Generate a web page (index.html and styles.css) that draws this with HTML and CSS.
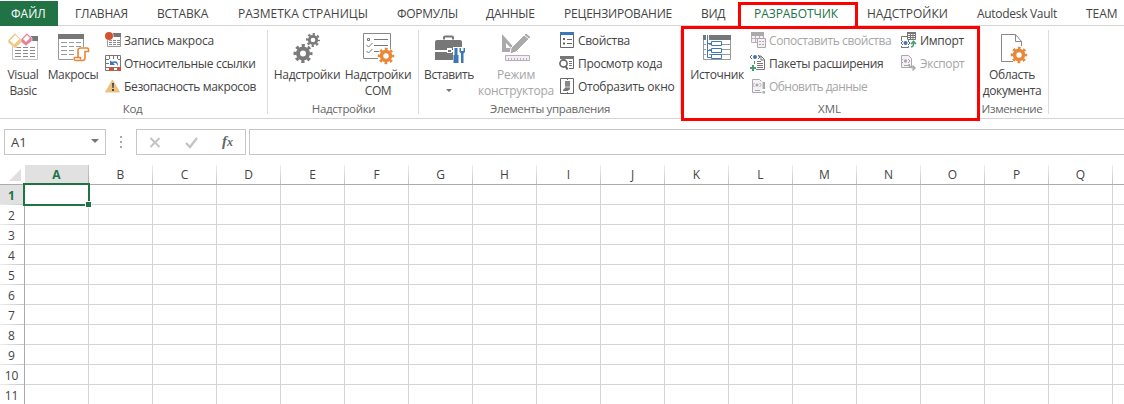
FILE: index.html
```
<!DOCTYPE html>
<html lang="ru">
<head>
<meta charset="utf-8">
<title>Excel</title>
<link rel="stylesheet" href="styles.css">
</head>
<body>
<div class="app">
<nav class="tabs">
<span class="file">ФАЙЛ</span>
<span class="tab t-home">ГЛАВНАЯ</span><span class="tab t-insert">ВСТАВКА</span><span class="tab t-layout">РАЗМЕТКА СТРАНИЦЫ</span><span class="tab t-formulas">ФОРМУЛЫ</span><span class="tab t-data">ДАННЫЕ</span><span class="tab t-review">РЕЦЕНЗИРОВАНИЕ</span><span class="tab t-view">ВИД</span><span class="tab t-dev">РАЗРАБОТЧИК</span><span class="tab t-addins">НАДСТРОЙКИ</span><span class="tab t-vault">Autodesk Vault</span><span class="tab t-team">TEAM</span>
<i class="mark mark-tab"></i>
</nav>

<div class="ribbon">
<section class="group g-code">
<div class="tools">
<div class="big b-vb">
<svg width="32" height="32" viewBox="-1 0 32 32"><path d="M4.500 13V27.500H29.500V6.500" fill="#fff" stroke="#c4c4c4"/><path d="M22 4h8v5h-8z" fill="#777"/><path d="M7 15.500h6m2 0h5m2 0h5M7 18.500h6m2 0h5m2 0h5M7 21.500h6m2 0h5m2 0h5M7 24.500h6m2 0h5m2 0h5" stroke="#8a8a8a"/><path d="M0 8l7-7 6.500 6.500v3L7 16.500l-7-6z" fill="#efc983" stroke="#fff" stroke-width=".6"/><path d="M7.500 3l4 4-5.500 5.500-4-4z" fill="#fff"/><path d="M13 7l6-6 5 5v3l-6 5-5-4z" fill="#e38198" stroke="#fff" stroke-width=".6"/><path d="M19 3l3 3-4 4-3-3z" fill="#fff"/></svg>
<span>Visual<br>Basic</span></div>
<div class="big b-macro">
<svg width="32" height="32" viewBox="0 0 32 32"><path d="M1.500 2.500h25v25h-25z" fill="#fff" stroke="#999"/><path d="M1 2h26v5H1z" fill="#777"/><path d="M4 10.500h6m2 0h5m2 0h5M4 14.500h6m2 0h5m2 0h5M4 18.500h6m2 0h5M4 22.500h6m2 0h5" stroke="#999"/><path d="M18 15h14v14H16z" fill="#fff"/><path d="M21 26V18q0-2 3-2h6q2 0 1.500 3.500H28V26q0 2.500-2.500 2.500H19q-2.500 0-1.500-3h6v2" fill="#fff" stroke="#e8883a" stroke-width="1.600"/></svg>
<span>Макросы</span></div>
<div class="list">
<div class="item"><svg width="16" height="16" viewBox="0 0 16 16"><path d="M2.500 4.500h13v10h-13z" fill="#fff" stroke="#999"/><path d="M8 1h8v4H8z" fill="#777"/><path d="M4 8.500h3m1 0h3m1 0h3M4 10.500h3m1 0h3m1 0h3M4 12.500h3m1 0h3m1 0h3" stroke="#888"/><circle cx="4" cy="4" r="4.600" fill="#fff"/><circle cx="4" cy="4" r="4" fill="#d35230"/></svg><span class="l1">Запись макроса</span></div>
<div class="item"><svg width="16" height="16" viewBox="0 0 16 16"><path d="M.5.500h15v15H.5zM4.500.5v15M.5 4.500h15M8.500.5v4M12.500.5v15M.5 8.500h4M.5 12.500h15M8.500 12v3" fill="#fff" stroke="#777"/><path d="M4 4h9v8H4z" fill="#fff"/><path d="M5 5.500V10h5L8.300 8.300Q11 6.500 13 11 13.500 4.500 7 6.800z" fill="#3b78b5"/><path d="M4 12h4v4H4zM12 12h4v4h-4z" fill="#d35230"/></svg><span class="l2">Относительные ссылки</span></div>
<div class="item"><svg width="16" height="16" viewBox="0 0 16 16"><path d="M7.500 2L14.500 14H.5z" fill="#ebc381" stroke="#ebc381" stroke-linejoin="round"/><path d="M7 5h2l-.4 5H7.400zM7 11h2v2H7z" fill="#444"/></svg><span class="l3">Безопасность макросов</span></div>
</div>
</div>
<div class="caption">Код</div>
</section>

<section class="group g-addins">
<div class="tools">
<div class="big b-add">
<svg width="32" height="32" viewBox="-1 0 32 32"><g fill="none" stroke="#7a7a7a"><circle cx="11" cy="21.500" r="5" stroke-width="4"/><circle cx="11" cy="21.500" r="8" stroke-width="3" stroke-dasharray="3.200 3.083" stroke-dashoffset="1.600"/><circle cx="21" cy="8" r="3.700" stroke-width="2.800"/><circle cx="21" cy="8" r="5.900" stroke-width="2.200" stroke-dasharray="2.300 2.334" stroke-dashoffset="1.100"/></g></svg>
<span>Надстройки</span></div>
<div class="big b-com">
<svg width="32" height="32" viewBox="0 0 32 32"><path d="M1.500 1.500h27v25h-27z" fill="#fff" stroke="#888"/><path d="M5.500 6.500h2v2h-2zM12 7.500h14M12 13.500h14M12 19.500h7M4.500 13l2 2 4-4M4.500 19l2 2 4-4" fill="none" stroke="#777"/><circle cx="24" cy="24" r="8.500" fill="#fff"/><g fill="none" stroke="#e8883a"><circle cx="24" cy="24" r="4.500" stroke-width="3.500"/><circle cx="24" cy="24" r="7" stroke-width="2.500" stroke-dasharray="2.800 2.698" stroke-dashoffset="1.400"/></g></svg>
<span>Надстройки<br>COM</span></div>
</div>
<div class="caption">Надстройки</div>
</section>

<section class="group g-controls">
<div class="tools">
<div class="big b-ins">
<svg width="32" height="32" viewBox="0 0 32 32"><path d="M11 7.500V5.500q0-1 1-1h7q1 0 1 1v2" fill="none" stroke="#777" stroke-width="2"/><path d="M4 8h23q2 0 2 2v8H2v-8q0-2 2-2zM2 20h27v8H2z" fill="#777"/><path d="M14 16h5v5h-5z" fill="#fff"/><path d="M15 18h3v2h-3z" fill="#777"/><path d="M20 15h12v16H20z" fill="#fff"/><path d="M21.500 16h3v7h1v8h-5v-8h1zM26.500 16v4l1.500 1.500V31h2.500v-9.500L32 20v-4h-1.500v3H28v-3z" fill="#3b78b5"/></svg>
<span>Вставить</span><i class="caret"></i></div>
<div class="big b-design off">
<svg width="32" height="32" viewBox="0 0 32 32"><path d="M2 2v18h16zM6 11l5 5H6z" fill="#aaa" fill-rule="evenodd"/><path d="M11 16L26 1l5 4-15 15-6 2z" fill="#aaa" stroke="#fff"/><path d="M24 3l5 4" stroke="#fff"/><path d="M5.500 23.500h24v5h-24z" fill="#f4eef4" stroke="#b8b0b8"/><path d="M8.500 26v3m3-3v3m3-3v3m3-3v3m3-3v3m3-3v3m3-3v3" stroke="#b8b0b8"/></svg>
<span>Режим<br>конструктора</span></div>
<div class="list">
<div class="item"><svg width="16" height="16" viewBox="0 0 16 16"><path d="M1.500.5h13v15h-13z" fill="#fff" stroke="#666"/><path d="M1 0h14v3H1z" fill="#3b78b5"/><path d="M4 6h2v2H4zM4 10.500h2v2H4zM8 7h5v1H8zM8 11h5v1H8z" fill="#666"/></svg><span class="l4">Свойства</span></div>
<div class="item"><svg width="16" height="16" viewBox="0 0 16 16"><path d="M1.500 4V1.500h13v12H10" fill="none" stroke="#666"/><path d="M1 1h14v3H1zM10 6h3v1h-3zM10 8h3v1h-3zM10 10h3v1h-3z" fill="#777"/><circle cx="4.500" cy="8.500" r="3.600" fill="#fff" stroke="#666" stroke-width="1.600"/><path d="M6.500 11l2 3.500" stroke="#666" stroke-width="2"/></svg><span class="l5">Просмотр кода</span></div>
<div class="item"><svg width="16" height="16" viewBox="0 0 16 16"><path d="M1.500.5h13v15h-13z" fill="#fff" stroke="#666"/><path d="M6 3h5v9H6z" fill="#aaa"/><path d="M6 3h5v5H6z" fill="#888"/><path d="M4 12l2-2h5l-2 3H4zM8 1h1v1H8zM8 14h1v1H8z" fill="#777"/></svg><span class="l6">Отобразить окно</span></div>
</div>
</div>
<div class="caption">Элементы управления</div>
</section>

<section class="group g-xml">
<div class="tools">
<div class="big b-src">
<svg width="32" height="32" viewBox="0 0 32 32"><path d="M2.500 4v23.500h27V4M2 12.500h27M2 17.500h27M2 22.500h27" fill="#fff" stroke="#999"/><path d="M2 3h28v5H2z" fill="#777"/><path d="M6.500 3v22.500" stroke="#fff" stroke-width="3"/><path d="M6.500 3v22.500h4M6.500 11.500h4M6.500 18.500h4" fill="none" stroke="#3b78b5"/><path d="M10.500 9.500h10v4h-10zM10.500 16.500h10v4h-10zM10.500 22.500h10v4h-10z" fill="#fff" stroke="#3b78b5"/></svg>
<span>Источник</span></div>
<div class="list list-map">
<div class="item off"><svg width="16" height="16" viewBox="0 0 16 16"><path d="M1.500.5h12v10h-12zM5.500 3v8M9.500 3v4M1 6.500h8" fill="#f6f0f6" stroke="#b8b0b8"/><path d="M1 0h13v4H1z" fill="#aaa"/><path d="M7.500 6.500h8v9h-8z" fill="#f6f0f6" stroke="#aaa"/><path d="M9 9h2v1H9zM12 9h2v1h-2zM9 12h2v1H9zM12 12h2v1h-2z" fill="#aaa"/></svg><span class="l7">Сопоставить свойства</span></div>
<div class="item"><svg width="16" height="16" viewBox="0 0 16 16"><path d="M4.500 6v8.500h10V4.500L11 1H8" fill="#fff" stroke="#777"/><path d="M11 1v4h4" fill="none" stroke="#777"/><path d="M7 6.500h4M7 8.500h6M7 10.500h6M7 12.500h6" stroke="#777"/><path d="M2 0L0 2l2 2m6-4l2 2-2 2" fill="none" stroke="#666"/><circle cx="5" cy="2" r="2" fill="#3b78b5"/><path d="M-1 9h7v7h-7z" fill="#fff"/><path d="M2 10h2v2h2v2H4v2H2v-2H0v-2h2z" fill="#41a171"/></svg><span class="l8">Пакеты расширения</span></div>
<div class="item off"><svg width="16" height="16" viewBox="0 0 16 16"><path d="M2.500 1.500h7l3 3v10h-10z" fill="#f6f0f6" stroke="#aaa"/><path d="M4.500 5l-2 2 2 2m5-4l2 2-2 2M5 12.500h5" fill="none" stroke="#aaa"/><circle cx="7" cy="7" r="1.600" fill="#aaa"/><path d="M11.500 3h5v13h-5z" fill="#fff"/><path d="M12.500 4H15v7h-2.500zM12.500 13H15v2.500h-2.500z" fill="#aaa"/></svg><span class="l9">Обновить данные</span></div>
</div>
<div class="list list-io">
<div class="item"><svg width="16" height="16" viewBox="0 0 16 16"><path d="M1.500 4.500h7v11h-7z" fill="#fff" stroke="#777"/><path d="M7.500.5h8v7h-8zM7 3.500h8M7 5.500h8M10.500 2v6M13 2v6" fill="#fff" stroke="#777"/><path d="M7 0h9v2H7z" fill="#777"/><path d="M0 9h10v5H0z" fill="#fff"/><path d="M3 9l-2 2 2 2m5-4l2 2-2 2" fill="none" stroke="#666"/><circle cx="5.500" cy="11" r="2" fill="#3b78b5"/><path d="M11 15q3 0 2.500-5m-2.500 2l2.500-2.500L16 12" fill="none" stroke="#41a171" stroke-width="1.600"/></svg><span class="l10">Импорт</span></div>
<div class="item off"><svg width="16" height="16" viewBox="0 0 16 16"><path d="M1.500.5h7l3 3v9h-10z" fill="#f6f0f6" stroke="#aaa"/><path d="M3 4L1 6l2 2m5-4l2 2-2 2M4 10.500h5" fill="none" stroke="#aaa"/><circle cx="5.500" cy="6" r="1.700" fill="#aaa"/><path d="M9 9q0 4 6 4m-2.500-2.500L15 13l-2.500 2.500" fill="none" stroke="#aaa" stroke-width="1.600"/></svg><span class="l11">Экспорт</span></div>
</div>
</div>
<div class="caption">XML</div>
<i class="mark mark-group"></i>
</section>

<section class="group g-modify">
<div class="tools">
<div class="big b-doc">
<svg width="32" height="32" viewBox="0 0 32 32"><path d="M5.500 2.500h14l6 7v20h-20z" fill="#fff" stroke="#888"/><path d="M19.500 2.500v7h6" fill="none" stroke="#888"/><path d="M17 14h13v17H17z" fill="#fff"/><g fill="none" stroke="#e8883a"><circle cx="23" cy="23" r="4.500" stroke-width="3.500"/><circle cx="23" cy="23" r="7" stroke-width="2.500" stroke-dasharray="2.800 2.698" stroke-dashoffset="1.400"/></g></svg>
<span>Область<br>документа</span></div>
</div>
<div class="caption">Изменение</div>
</section>
</div>

<div class="formula">
<div class="namebox"><span>A1</span><i class="caret"></i></div>
<div class="dots"><i></i><i></i><i></i></div>
<div class="fxbox">
<svg width="108" height="24" viewBox="0 0 108 24"><path d="M13.500 8l9 9m0-9l-9 9" stroke="#c3c3c3" stroke-width="2"/><path d="M49 13l4 4 7-9" fill="none" stroke="#c3c3c3" stroke-width="2.400"/></svg>
<em>f<small>x</small></em></div>
<div class="input"></div>
</div>

<div class="sheet">
<div class="corner"><svg width="24" height="19" viewBox="0 0 24 19"><path d="M21 4v12H9z" fill="#dfdfdf"/></svg></div>
<div class="cols"><b>A</b><span>B</span><span>C</span><span>D</span><span>E</span><span>F</span><span>G</span><span>H</span><span>I</span><span>J</span><span>K</span><span>L</span><span>M</span><span>N</span><span>O</span><span>P</span><span>Q</span><span></span></div>
<div class="rows"><b>1</b><span>2</span><span>3</span><span>4</span><span>5</span><span>6</span><span>7</span><span>8</span><span>9</span><span>10</span><span>11</span></div>
<div class="cells"><div class="selection"><i></i></div></div>
</div>
</div>
</body>
</html>
```
FILE: styles.css
```
* { box-sizing: border-box; }
body { margin: 0; background: #fff; color: #444; font: 12px/16px "Open Sans", "Noto Sans", sans-serif; }
svg { display: block; flex: none; overflow: visible; }
.app { width: 1124px; height: 404px; overflow: hidden; display: flex; flex-direction: column; }

.tabs { position: relative; flex: none; height: 26px; display: flex; border-bottom: 1px solid #d4d4d4; white-space: nowrap; }
.file { width: 58px; height: 25px; margin: 1px 2.500px 0 0; padding-left: 11px; background: #217346; color: #fff; line-height: 25px; }
.tab { flex: none; padding-left: 14.500px; line-height: 27px; letter-spacing: -0.3px; }
.t-home { width: 82px; letter-spacing: -0.15px; }
.t-insert { width: 81px; letter-spacing: -0.15px; }
.t-layout { width: 159px; letter-spacing: 0; }
.t-formulas { width: 89px; }
.t-data { width: 78px; }
.t-review { width: 137px; letter-spacing: -0.2px; }
.t-view { width: 53px; }
.t-dev { width: 113px; height: 26px; background: #fff; color: #217346; letter-spacing: -0.05px; }
.t-addins { width: 110px; letter-spacing: 0; }
.t-vault { width: 109px; }
.t-team { width: 46px; letter-spacing: 0; }
.mark { position: absolute; z-index: 2; border: 3px solid #f00; }
.mark-tab { left: 738px; top: 2px; width: 120px; height: 27px; }
.mark-group { left: 0; top: 0; width: 299px; height: 95px; }

.ribbon { flex: none; height: 93px; display: flex; border-bottom: 1px solid #d4d4d4; }
.group { position: relative; flex: none; display: flex; flex-direction: column; }
.group::after { content: ""; position: absolute; right: 0; top: 4px; width: 1px; height: 84px; background: #dcdcdc; }
.g-code { width: 268px; }
.g-addins { width: 151px; }
.g-controls { width: 262px; }
.g-xml { width: 299px; }
.g-modify { width: 69px; }
.g-xml::after { display: none; }
.tools { height: 76px; display: flex; padding-top: 4px; }
.caption { color: #666; text-align: center; font-size: 11.500px; line-height: 18px; white-space: nowrap; letter-spacing: -0.35px; }
.g-code .caption { padding-right: 3px; }
.g-modify .caption { padding-right: 5px; }
.g-xml .caption { padding-right: 2px; letter-spacing: 0; }
.big { flex: none; display: flex; flex-direction: column; align-items: center; gap: 3px; padding-top: 2px; text-align: center; white-space: nowrap; letter-spacing: -0.35px; }
.b-vb { width: 40px; margin-left: 3px; }
.b-macro { width: 52px; margin-left: 4px; }
.b-add { width: 70px; margin-left: 4px; }
.b-com { width: 70px; margin-left: 1px; }
.b-ins { width: 52px; margin-left: 4px; letter-spacing: -0.7px; }
.b-ins { letter-spacing: -0.4px; }
.b-design { width: 78px; margin-left: 2px; letter-spacing: -0.25px; }
.b-src { width: 60px; margin-left: 6px; }
.b-doc { width: 62px; margin-left: 1px; }
.off { color: #a6a6a6; }
.caret { width: 0; height: 0; border: 3px solid transparent; border-top-color: #777; border-bottom: 0; }
.b-ins .caret { margin-top: 3px; }
.list { display: flex; flex-direction: column; margin-left: 6px; }
.g-controls .list { margin-left: 4px; }
.g-xml .list { margin-left: 3px; }
.g-xml .list-map { width: 141px; }
.g-xml .list-io { margin-left: 9px; }
.list-io .item { gap: 4px; }
.item { height: 23px; display: flex; align-items: flex-start; gap: 3px; padding-top: 2px; white-space: nowrap; letter-spacing: -0.3px; }
.item span { margin-top: 1px; }
.item .l1 { letter-spacing: -0.25px; }
.item .l3 { letter-spacing: -0.35px; }
.item .l7 { letter-spacing: -0.4px; }
.item .l8 { letter-spacing: -0.35px; }
.item .l9 { letter-spacing: -0.55px; }
.item .l11 { letter-spacing: -0.4px; }

.formula { flex: none; height: 46px; padding-top: 10px; display: flex; }
.namebox { width: 102px; height: 26px; margin-left: 4px; border: 1px solid #c6c6c6; padding: 0 6px 0 6px; display: flex; align-items: center; justify-content: space-between; font-size: 13px; }
.namebox .caret { border-width: 4px 4px 0; margin-top: -2px; }
.dots { width: 30px; height: 26px; display: flex; flex-direction: column; align-items: center; justify-content: center; gap: 3px; }
.dots i { width: 2px; height: 2px; background: #aaa; }
.fxbox { position: relative; width: 110px; height: 26px; border: 1px solid #c6c6c6; }
.fxbox em { position: absolute; left: 85px; top: 1px; font: italic bold 15px/20px "Liberation Serif", serif; color: #666; }
.fxbox small { font-size: 12px; }
.input { flex: 1; height: 26px; margin-left: 3px; border: 1px solid #c6c6c6; border-right: 0; }

.sheet { flex: 1; display: grid; grid-template-columns: 25px 1100px; grid-template-rows: 20px 220px; }
.corner, .cols { border-bottom: 1px solid #ababab; }
.cols { display: flex; }
.cols > * { flex: none; width: 64px; line-height: 19px; text-align: center; border-right: 1px solid; border-image: linear-gradient(#eee, #c4c4c4) 1; }
.cols b, .rows b { background: #e1e1e1; color: #217346; }
.cols b { border-image: linear-gradient(#ccc, #aaa) 1; }
.rows { border-right: 1px solid #ababab; display: flex; flex-direction: column; }
.rows > * { height: 20px; line-height: 21px; text-align: center; border-bottom: 1px solid; border-image: linear-gradient(90deg, #eee, #c4c4c4) 1; }
.rows > *, .cols > * { padding-right: 1px; }
.cols > * { padding-right: 0; }
.cells { position: relative; background-image: linear-gradient(90deg, transparent 63px, #d4d4d4 63px), linear-gradient(transparent 19px, #d4d4d4 19px); background-size: 64px 20px; }
.selection { position: absolute; left: -2px; top: -2px; width: 67px; height: 23px; border: 2px solid #217346; }
.selection i { position: absolute; right: -4px; bottom: -4px; width: 7px; height: 7px; background: #217346; border: 1px solid #fff; }
```
